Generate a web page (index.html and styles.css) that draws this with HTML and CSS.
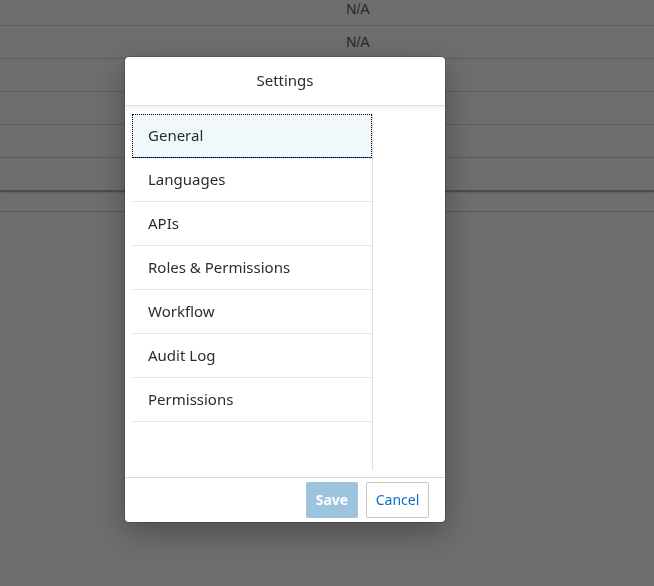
FILE: index.html
```html
<!DOCTYPE html>
<html>
<head>
<meta charset="utf-8">
<link rel="stylesheet" href="styles.css">
</head>
<body>
<div class="table">
  <div class="row row-first"><span class="cell">N/A</span></div>
  <div class="row"><span class="cell">N/A</span></div>
  <div class="row"></div>
  <div class="row"></div>
  <div class="row"></div>
  <div class="row row-last"></div>
  <div class="row row-foot"></div>
</div>
<div class="overlay"></div>
<div class="dialog">
  <div class="dialog-header">Settings</div>
  <div class="dialog-content">
    <ul class="nav">
      <li class="nav-item selected">General</li>
      <li class="nav-item">Languages</li>
      <li class="nav-item">APIs</li>
      <li class="nav-item">Roles &amp; Permissions</li>
      <li class="nav-item">Workflow</li>
      <li class="nav-item">Audit Log</li>
      <li class="nav-item">Permissions</li>
    </ul>
    <div class="detail"></div>
  </div>
  <div class="dialog-footer">
    <button class="btn btn-save">Save</button>
    <button class="btn btn-cancel">Cancel</button>
  </div>
</div>
</body>
</html>
```

FILE: styles.css
```css
html, body {
  margin: 0;
  padding: 0;
}
body {
  width: 654px;
  height: 586px;
  overflow: hidden;
  background: #ffffff;
  font-family: "Noto Sans", "Liberation Sans", sans-serif;
  position: relative;
}
.table {
  display: flex;
  flex-direction: column;
}
.row {
  height: 32px;
  border-bottom: 1px solid #d8d8d8;
  display: flex;
  align-items: center;
  justify-content: center;
  padding-left: 62px;
}
.row-first {
  height: 25px;
  align-items: flex-start;
}
.row-last {
  border-bottom: 2px solid #b5b5b5;
  box-shadow: 0 1px 2px rgba(0,0,0,0.15);
}
.row-foot {
  height: 19px;
  border-bottom: 1px solid #cfcfcf;
}
.cell {
  font-family: "Liberation Sans", sans-serif;
  font-size: 14px;
  color: #585b5e;
}
.row-first .cell {
  margin-top: 1px;
}
.overlay {
  position: fixed;
  inset: 0;
  background: rgba(0, 0, 0, 0.57);
}
.dialog {
  position: absolute;
  left: 125px;
  top: 57px;
  width: 320px;
  height: 465px;
  background: #ffffff;
  border-radius: 4px;
  box-shadow: 0 10px 30px rgba(0,0,0,0.3), 0 0 0 1px rgba(0,0,0,0.15);
  display: flex;
  flex-direction: column;
  overflow: hidden;
}
.dialog-header {
  height: 45px;
  border-bottom: 1px solid #e2e2e2;
  box-shadow: 0 2px 4px rgba(0,0,0,0.06);
  display: flex;
  align-items: center;
  justify-content: center;
  font-size: 15px;
  color: #2a2d30;
  position: relative;
  z-index: 1;
  padding-bottom: 3px;
  box-sizing: content-box;
}
.dialog-content {
  flex: 1;
  display: flex;
  padding: 8px 0 7px 7px;
}
.nav {
  list-style: none;
  margin: 0;
  padding: 0;
  width: 240px;
  border-right: 1px solid #e0e0e0;
}
.nav-item {
  height: 41px;
  padding-bottom: 2px;
  border-bottom: 1px solid #e5e5e5;
  display: flex;
  align-items: center;
  padding-left: 16px;
  font-size: 15px;
  color: #2a2d30;
  box-sizing: content-box;
}
.nav-item.selected {
  background: #f0f8fc;
  border-bottom: 1px solid #0a6ed1;
  outline: 1px dotted #000;
  outline-offset: -1px;
}
.detail {
  flex: 1;
}
.dialog-footer {
  height: 44px;
  border-top: 1px solid #d9d9d9;
  display: flex;
  align-items: center;
  justify-content: flex-end;
  gap: 8px;
  padding-right: 16px;
}
.btn {
  height: 36px;
  font-family: "Noto Sans", "Liberation Sans", sans-serif;
  font-size: 14px;
  border-radius: 2px;
  padding: 0 0 2px;
  cursor: pointer;
}
.btn-save {
  background: #9cc4de;
  color: #ffffff;
  font-weight: bold;
  border: none;
  width: 52px;
}
.btn-cancel {
  background: #ffffff;
  color: #0a6ed1;
  border: 1px solid #c8c8c8;
  width: 63px;
}
```
